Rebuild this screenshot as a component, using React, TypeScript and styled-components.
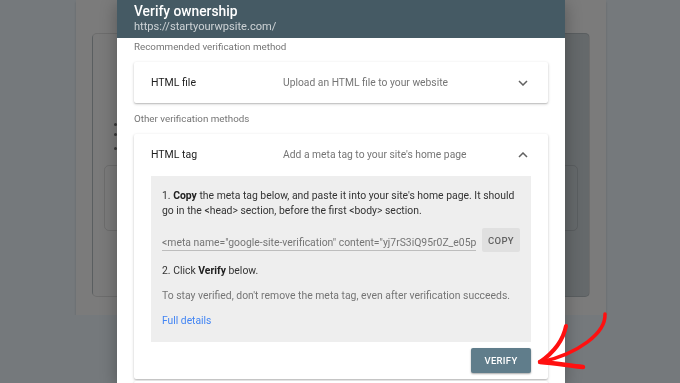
import React from "react";
import styled, { createGlobalStyle } from "styled-components";

const GlobalStyle = createGlobalStyle`
  html, body {
    margin: 0;
    background: #75797c;
    font-family: Roboto, "Noto Sans", Arial, sans-serif;
    overflow: hidden;
  }
`;

/* page behind the dialog (already dimmed) */
const BackPage = styled.div`
  margin-left: 76px;
  width: 530px;
  height: 315px;
  box-sizing: border-box;
  padding: 33px 16px 0;
  background: #7b7b7b;
  box-shadow: 0 2px 2px rgba(0, 0, 0, 0.18);
`;

const BackPanel = styled.div`
  height: 264px;
  box-sizing: border-box;
  border: 1px solid rgba(0, 0, 0, 0.1);
  border-radius: 5px;
  background: linear-gradient(to right, #7a7a7a 0 45%, #65696b 45%);
  padding: 89px 11px 0;
`;

const Bullet = styled.div<{ $gap: number }>`
  width: 3px;
  height: 3px;
  border-radius: 50%;
  background: #3a3a3a;
  margin: ${(p) => p.$gap}px 0 0 10px;
`;

const BackBox = styled.div`
  margin-top: 15px;
  height: 64px;
  border: 1px solid rgba(0, 0, 0, 0.1);
  border-radius: 5px;
`;

/* dialog */
const Overlay = styled.div`
  position: fixed;
  inset: 0;
  display: flex;
  justify-content: center;
  padding-left: 2px;
`;

const Dialog = styled.div`
  width: 448px;
  background: #ffffff;
  box-shadow: 0 4px 16px rgba(0, 0, 0, 0.3);
`;

const Header = styled.div`
  height: 38px;
  box-sizing: border-box;
  padding: 3px 17px 0;
  background: #455a64;
  color: #ffffff;
`;

const Title = styled.div`
  font-size: 13.8px;
  font-weight: 500;
  line-height: 16px;
`;

const SiteUrl = styled.div`
  margin-top: 1px;
  font-size: 11.1px;
  line-height: 14px;
  color: rgba(255, 255, 255, 0.72);
`;

const Body = styled.div`
  padding: 2px 17px 0;
`;

const SectionLabel = styled.div<{ $top: number }>`
  margin: ${(p) => p.$top}px 0 8px;
  font-size: 9.8px;
  line-height: 14px;
  color: #757575;
`;

const Card = styled.div`
  background: #ffffff;
  border-radius: 2px;
  box-shadow: 0 1px 3px rgba(0, 0, 0, 0.22), 0 1px 1px rgba(0, 0, 0, 0.1);
`;

const CardHead = styled.div`
  display: grid;
  grid-template-columns: 132px 1fr 24px;
  align-items: center;
  height: 41px;
  padding: 0 13px 0 17px;
`;

const MethodName = styled.div`
  font-size: 10.5px;
  color: #212121;
`;

const MethodHint = styled.div`
  font-size: 10.3px;
  color: #757575;
`;

const ChevronBox = styled.div`
  display: flex;
  justify-content: center;
  align-items: center;
`;

const Instructions = styled.div`
  margin: 1px 17px 0;
  padding: 12px 11px 14px;
  background: #eeeeee;
  font-size: 10.4px;
  line-height: 15px;
  color: #333333;
`;

const Step = styled.div<{ $top?: number; $muted?: boolean }>`
  margin-top: ${(p) => p.$top ?? 0}px;
  white-space: nowrap;
  color: ${(p) => (p.$muted ? "#757575" : "#333333")};
  b {
    font-weight: 700;
    color: #212121;
  }
`;

const CopyRow = styled.div`
  display: flex;
  align-items: flex-end;
  gap: 6px;
  height: 24px;
  margin-top: 10px;
`;

const MetaField = styled.div`
  flex: 0 0 314px;
  margin-bottom: 1px;
  border-bottom: 1px solid #bdbdbd;
  overflow: hidden;
  white-space: nowrap;
  line-height: 15px;
  color: #757575;
`;

const CopyButton = styled.button`
  width: 38px;
  height: 24px;
  padding: 0;
  border: none;
  border-radius: 2px;
  background: #e0e0e0;
  font-family: inherit;
  font-size: 9.5px;
  font-weight: 500;
  letter-spacing: 0.3px;
  color: #616161;
`;

const DetailsLink = styled.a`
  display: block;
  margin-top: 10px;
  color: #4285f4;
  text-decoration: none;
  font-size: 10.3px;
`;

const Actions = styled.div`
  display: flex;
  justify-content: flex-end;
  padding: 6px 17px 6px;
`;

const VerifyButton = styled.button`
  width: 60px;
  height: 25px;
  padding: 0;
  border: none;
  border-radius: 2px;
  background: #607d8b;
  box-shadow: 0 1px 2px rgba(0, 0, 0, 0.35);
  font-family: inherit;
  font-size: 9.5px;
  font-weight: 500;
  letter-spacing: 0.3px;
  color: #ffffff;
`;

const NextCard = styled(Card)`
  margin-top: 2px;
  height: 20px;
`;

const Arrow = styled.svg`
  position: absolute;
  left: 528px;
  top: 305px;
  pointer-events: none;
`;

const Chevron = ({ up }: { up?: boolean }) => (
  <svg width="10" height="6" viewBox="0 0 10 6">
    <polyline
      points={up ? "1,5 5,1 9,5" : "1,1 5,5 9,1"}
      fill="none"
      stroke="#616161"
      strokeWidth="1.5"
    />
  </svg>
);

export default function App() {
  return (
    <>
      <GlobalStyle />
      <BackPage>
        <BackPanel>
          <Bullet $gap={0} />
          <Bullet $gap={7} />
          <Bullet $gap={11} />
          <BackBox />
        </BackPanel>
      </BackPage>

      <Overlay>
        <Dialog>
          <Header>
            <Title>Verify ownership</Title>
            <SiteUrl>https://startyourwpsite.com/</SiteUrl>
          </Header>
          <Body>
            <SectionLabel $top={0}>Recommended verification method</SectionLabel>
            <Card>
              <CardHead>
                <MethodName>HTML file</MethodName>
                <MethodHint>Upload an HTML file to your website</MethodHint>
                <ChevronBox>
                  <Chevron />
                </ChevronBox>
              </CardHead>
            </Card>

            <SectionLabel $top={9}>Other verification methods</SectionLabel>
            <Card>
              <CardHead>
                <MethodName>HTML tag</MethodName>
                <MethodHint>Add a meta tag to your site's home page</MethodHint>
                <ChevronBox>
                  <Chevron up />
                </ChevronBox>
              </CardHead>
              <Instructions>
                <Step>
                  1. <b>Copy</b> the meta tag below, and paste it into your site's home page. It should
                  <br />
                  go in the &lt;head&gt; section, before the first &lt;body&gt; section.
                </Step>
                <CopyRow>
                  <MetaField>
                    &lt;meta name="google-site-verification" content="yj7rS3iQ95r0Z_e05p
                  </MetaField>
                  <CopyButton>COPY</CopyButton>
                </CopyRow>
                <Step $top={11}>
                  2. Click <b>Verify</b> below.
                </Step>
                <Step $top={10} $muted>
                  To stay verified, don't remove the meta tag, even after verification succeeds.
                </Step>
                <DetailsLink href="#">Full details</DetailsLink>
              </Instructions>
              <Actions>
                <VerifyButton>VERIFY</VerifyButton>
              </Actions>
            </Card>
            <NextCard />
          </Body>
        </Dialog>

        <Arrow width="84" height="70" viewBox="528 305 84 70">
          <g fill="none" stroke="#ff1010" strokeLinecap="round" strokeLinejoin="round">
            <path d="M605 314 C606 333 578 354 541 362" strokeWidth="3.5" />
            <path d="M566 326 C563 341 553 353 540 362" strokeWidth="4" />
            <path d="M540 362 C556 363 570 366 583 367" strokeWidth="4.5" />
          </g>
        </Arrow>
      </Overlay>
    </>
  );
}
